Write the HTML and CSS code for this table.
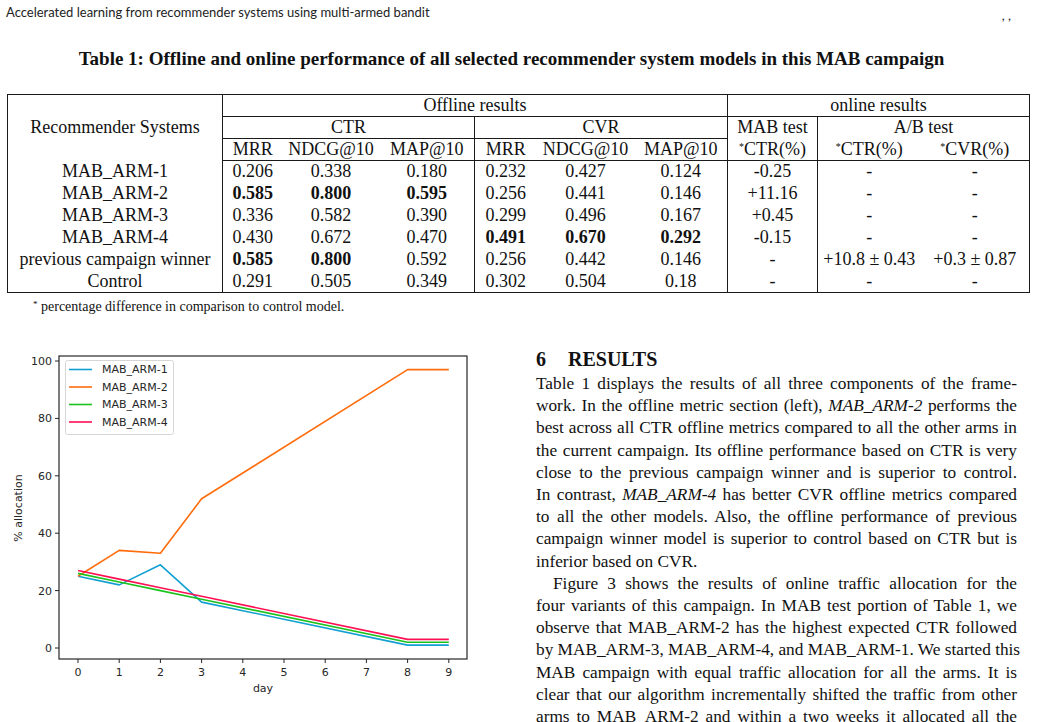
FILE: index.html
```html
<!DOCTYPE html>
<html lang="en">
<head>
    <meta charset="UTF-8">
    <meta name="viewport" content="width=device-width, initial-scale=1.0">
    <title>Accelerated learning from recommender systems using multi-armed bandit</title>
    <link rel="stylesheet" href="styles.css">
</head>
<body>
    <!-- running head -->
    <header class="running-head">
        <span>Accelerated learning from recommender systems using multi-armed bandit</span>
        <span class="meta">, ,</span>
    </header>

    <div class="table-float">
        <p class="caption">Table 1: Offline and online performance of all selected recommender system models in this MAB campaign</p>
        <table class="results">
            <colgroup>
                <col style="width:215px">
                <col style="width:60px"><col style="width:97px"><col style="width:95px">
                <col style="width:62px"><col style="width:98px"><col style="width:93px">
                <col style="width:90px">
                <col style="width:103px"><col style="width:109px">
            </colgroup>
            <thead>
                <tr>
                    <th rowspan="3" class="name">Recommender Systems</th>
                    <th colspan="6" class="under">Offline results</th>
                    <th colspan="3" class="under bl">online results</th>
                </tr>
                <tr>
                    <th colspan="3" class="under">CTR</th>
                    <th colspan="3" class="under bl">CVR</th>
                    <th class="bl">MAB test</th>
                    <th colspan="2" class="bl">A/B test</th>
                </tr>
                <tr class="last-head">
                    <th>MRR</th><th>NDCG@10</th><th>MAP@10</th>
                    <th class="bl">MRR</th><th>NDCG@10</th><th>MAP@10</th>
                    <th class="bl"><sup>*</sup>CTR(%)</th>
                    <th class="bl"><sup>*</sup>CTR(%)</th><th><sup>*</sup>CVR(%)</th>
                </tr>
            </thead>
            <tbody>
                <tr>
                    <td class="name">MAB_ARM-1</td>
                    <td>0.206</td><td>0.338</td><td>0.180</td>
                    <td class="bl">0.232</td><td>0.427</td><td>0.124</td>
                    <td class="bl">-0.25</td>
                    <td class="bl">-</td><td>-</td>
                </tr>
                <tr>
                    <td class="name">MAB_ARM-2</td>
                    <td><b>0.585</b></td><td><b>0.800</b></td><td><b>0.595</b></td>
                    <td class="bl">0.256</td><td>0.441</td><td>0.146</td>
                    <td class="bl">+11.16</td>
                    <td class="bl">-</td><td>-</td>
                </tr>
                <tr>
                    <td class="name">MAB_ARM-3</td>
                    <td>0.336</td><td>0.582</td><td>0.390</td>
                    <td class="bl">0.299</td><td>0.496</td><td>0.167</td>
                    <td class="bl">+0.45</td>
                    <td class="bl">-</td><td>-</td>
                </tr>
                <tr>
                    <td class="name">MAB_ARM-4</td>
                    <td>0.430</td><td>0.672</td><td>0.470</td>
                    <td class="bl"><b>0.491</b></td><td><b>0.670</b></td><td><b>0.292</b></td>
                    <td class="bl">-0.15</td>
                    <td class="bl">-</td><td>-</td>
                </tr>
                <tr>
                    <td class="name">previous campaign winner</td>
                    <td><b>0.585</b></td><td><b>0.800</b></td><td>0.592</td>
                    <td class="bl">0.256</td><td>0.442</td><td>0.146</td>
                    <td class="bl">-</td>
                    <td class="bl">+10.8 ± 0.43</td><td>+0.3 ± 0.87</td>
                </tr>
                <tr>
                    <td class="name">Control</td>
                    <td>0.291</td><td>0.505</td><td>0.349</td>
                    <td class="bl">0.302</td><td>0.504</td><td>0.18</td>
                    <td class="bl">-</td>
                    <td class="bl">-</td><td>-</td>
                </tr>
            </tbody>
        </table>
        <p class="note"><sup>*</sup> percentage difference in comparison to control model.</p>
    </div>

    <div class="columns">
        <!-- Figure 3: traffic allocation per day -->
        <div class="col-left">
            <svg class="chart" width="480" height="370" viewBox="0 0 480 370">
                <!-- y ticks: v -> 306 - 2.87v -->
                <g class="ticks">
                    <line x1="55" y1="306" x2="59" y2="306"/>
                    <line x1="55" y1="248.6" x2="59" y2="248.6"/>
                    <line x1="55" y1="191.2" x2="59" y2="191.2"/>
                    <line x1="55" y1="133.8" x2="59" y2="133.8"/>
                    <line x1="55" y1="76.4" x2="59" y2="76.4"/>
                    <line x1="55" y1="19" x2="59" y2="19"/>
                    <!-- x ticks: d -> 78 + 41.2d -->
                    <line x1="78" y1="317" x2="78" y2="321"/>
                    <line x1="119.2" y1="317" x2="119.2" y2="321"/>
                    <line x1="160.4" y1="317" x2="160.4" y2="321"/>
                    <line x1="201.6" y1="317" x2="201.6" y2="321"/>
                    <line x1="242.8" y1="317" x2="242.8" y2="321"/>
                    <line x1="284" y1="317" x2="284" y2="321"/>
                    <line x1="325.2" y1="317" x2="325.2" y2="321"/>
                    <line x1="366.4" y1="317" x2="366.4" y2="321"/>
                    <line x1="407.6" y1="317" x2="407.6" y2="321"/>
                    <line x1="448.8" y1="317" x2="448.8" y2="321"/>
                </g>
                <g class="tick-labels y-labels">
                    <text x="52" y="310">0</text>
                    <text x="52" y="252.6">20</text>
                    <text x="52" y="195.2">40</text>
                    <text x="52" y="137.8">60</text>
                    <text x="52" y="80.4">80</text>
                    <text x="52" y="23">100</text>
                </g>
                <g class="tick-labels x-labels">
                    <text x="78" y="334">0</text>
                    <text x="119.2" y="334">1</text>
                    <text x="160.4" y="334">2</text>
                    <text x="201.6" y="334">3</text>
                    <text x="242.8" y="334">4</text>
                    <text x="284" y="334">5</text>
                    <text x="325.2" y="334">6</text>
                    <text x="366.4" y="334">7</text>
                    <text x="407.6" y="334">8</text>
                    <text x="448.8" y="334">9</text>
                </g>
                <text class="axis-title" x="263" y="350">day</text>
                <text class="axis-title" transform="translate(22 166) rotate(-90)">% allocation</text>

                <polyline class="arm1" points="78,234.3 119.2,242.9 160.4,222.8 201.6,260.1 407.6,303.1 448.8,303.1"/>
                <polyline class="arm2" points="78,234.3 119.2,208.4 160.4,211.3 201.6,156.8 407.6,27.6 448.8,27.6"/>
                <polyline class="arm3" points="78,231.4 119.2,240 160.4,248.6 201.6,257.2 407.6,300.3 448.8,300.3"/>
                <polyline class="arm4" points="78,228.5 119.2,237.1 160.4,245.7 201.6,254.3 407.6,297.4 448.8,297.4"/>

                <rect class="frame" x="59" y="14" width="408" height="303"/>

                <!-- legend -->
                <rect class="legend-box" x="65.5" y="18.5" width="108" height="74" rx="2"/>
                <line class="arm1" x1="69" y1="27.5" x2="92" y2="27.5"/>
                <line class="arm2" x1="69" y1="45" x2="92" y2="45"/>
                <line class="arm3" x1="69" y1="62.5" x2="92" y2="62.5"/>
                <line class="arm4" x1="69" y1="80" x2="92" y2="80"/>
                <g class="legend-text">
                    <text x="102" y="31">MAB_ARM-1</text>
                    <text x="102" y="48.5">MAB_ARM-2</text>
                    <text x="102" y="66">MAB_ARM-3</text>
                    <text x="102" y="83.5">MAB_ARM-4</text>
                </g>
            </svg>
        </div>

        <section class="col-right">
            <h2 class="section"><span class="secnum">6</span>RESULTS</h2>
            <p class="para">
                <span class="ln">Table 1 displays the results of all three components of the frame-</span>
                <span class="ln">work. In the offline metric section (left), <i>MAB_ARM-2</i> performs the</span>
                <span class="ln">best across all CTR offline metrics compared to all the other arms in</span>
                <span class="ln">the current campaign. Its offline performance based on CTR is very</span>
                <span class="ln">close to the previous campaign winner and is superior to control.</span>
                <span class="ln">In contrast, <i>MAB_ARM-4</i> has better CVR offline metrics compared</span>
                <span class="ln">to all the other models. Also, the offline performance of previous</span>
                <span class="ln">campaign winner model is superior to control based on CTR but is</span>
                <span class="ln end">inferior based on CVR.</span>
            </p>
            <p class="para indent">
                <span class="ln">Figure 3 shows the results of online traffic allocation for the</span>
                <span class="ln">four variants of this campaign. In MAB test portion of Table 1, we</span>
                <span class="ln">observe that MAB_ARM-2 has the highest expected CTR followed</span>
                <span class="ln">by MAB_ARM-3, MAB_ARM-4, and MAB_ARM-1. We started this</span>
                <span class="ln">MAB campaign with equal traffic allocation for all the arms. It is</span>
                <span class="ln">clear that our algorithm incrementally shifted the traffic from other</span>
                <span class="ln">arms to MAB_ARM-2 and within a two weeks it allocated all the</span>
            </p>
        </section>
    </div>
</body>
</html>
```

FILE: styles.css
```css
* {
    margin: 0;
    padding: 0;
    box-sizing: border-box;
}

body {
    width: 1037px;
    background: #fff;
    color: #111;
    font-family: "Liberation Serif", "Times New Roman", serif;
}

/* running head */
.running-head {
    display: flex;
    justify-content: space-between;
    height: 22px;
    padding: 4px 26px 0 6px;
    font-family: Lato, "Open Sans", sans-serif;
    font-size: 13px;
    line-height: 16px;
    color: #222;
}

.running-head .meta {
    padding-top: 3px;
}

/* table float */
.caption {
    margin-top: 26px;
    padding-right: 14px;
    text-align: center;
    font-size: 19px;
    font-weight: bold;
    line-height: 22px;
}

.results {
    margin: 24px 0 0 7px;
    width: 1022px;
    table-layout: fixed;
    border-collapse: collapse;
    border: 1px solid #1a1a1a;
    font-size: 18px;
}

.results th,
.results td {
    height: 22px;
    padding: 0;
    line-height: 21px;
    text-align: center;
    font-weight: normal;
    white-space: nowrap;
}

.results .name {
    border-right: 1px solid #1a1a1a;
}

.results .bl {
    border-left: 1px solid #1a1a1a;
}

.results .under {
    border-bottom: 1px solid #1a1a1a;
}

.results .last-head th {
    border-bottom: 1px solid #1a1a1a;
}

.results b {
    font-weight: bold;
}

.results sup {
    font-size: 10px;
    vertical-align: 5px;
    line-height: 0;
}

.note {
    margin-top: 6px;
    padding-left: 33px;
    font-size: 14px;
    line-height: 16px;
}

.note sup {
    font-size: 9px;
    vertical-align: 4px;
    line-height: 0;
}

/* two columns */
.columns {
    display: flex;
    margin-top: 27px;
}

.col-left {
    width: 536px;
    flex: none;
}

.chart {
    display: block;
}

.chart .ticks line {
    stroke: #262626;
    stroke-width: 1;
}

.chart .tick-labels,
.chart .axis-title,
.chart .legend-text {
    font-family: "DejaVu Sans", sans-serif;
    font-size: 11px;
    fill: #262626;
}

.chart .y-labels {
    text-anchor: end;
}

.chart .x-labels,
.chart .axis-title {
    text-anchor: middle;
}

.chart .frame {
    fill: none;
    stroke: #262626;
    stroke-width: 1.2;
}

.chart .legend-box {
    fill: #fff;
    fill-opacity: 0.85;
    stroke: #d6d6d6;
    stroke-width: 1;
}

.chart polyline,
.chart line.arm1,
.chart line.arm2,
.chart line.arm3,
.chart line.arm4 {
    fill: none;
    stroke-width: 1.6;
    stroke-linejoin: round;
}

.chart .arm1 { stroke: #12a0d2; }
.chart .arm2 { stroke: #ff6c0c; }
.chart .arm3 { stroke: #1cc31c; }
.chart .arm4 { stroke: #ff1053; }

.col-right {
    width: 481px;
    flex: none;
    padding-top: 5px;
}

.section {
    font-size: 20px;
    font-weight: bold;
    line-height: 24px;
}

.secnum {
    display: inline-block;
    width: 32px;
}

.para {
    font-size: 17.3px;
    line-height: 22.2px;
}

.para:first-of-type {
    margin-top: 2px;
}

.ln {
    display: block;
    text-align: justify;
    text-align-last: justify;
    white-space: nowrap;
}

.ln.end {
    text-align-last: left;
}

.indent .ln:first-child {
    text-indent: 17px;
}
```
